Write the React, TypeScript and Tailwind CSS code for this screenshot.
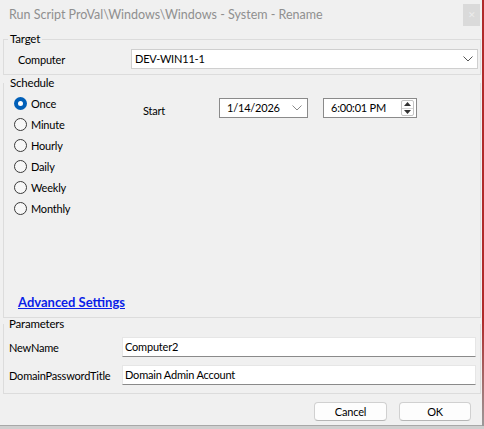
import React from 'react';

const radios = ['Once', 'Minute', 'Hourly', 'Daily', 'Weekly', 'Monthly'];

function Radio({ label, checked }: { label: string; checked?: boolean }) {
  return (
    <div className="h-[21px] flex items-center gap-[4px]">
      {checked ? (
        <div className="w-[13px] h-[13px] rounded-full bg-[#005fb8] flex items-center justify-center">
          <div className="w-[5px] h-[5px] rounded-full bg-white" />
        </div>
      ) : (
        <div className="w-[13px] h-[13px] rounded-full border border-[#3a3a3a] bg-[#f7f7f7]" />
      )}
      <span>{label}</span>
    </div>
  );
}

function Chevron({ color }: { color: string }) {
  return (
    <svg width="10" height="6" viewBox="0 0 10 6" fill="none">
      <path d="M0.5 0.5 L5 5 L9.5 0.5" stroke={color} strokeWidth="1" />
    </svg>
  );
}

export default function App() {
  return (
    <div className="w-[484px] h-[429px] flex bg-[#cfcfcf] text-[11px] tracking-[-0.2px] leading-[16px] text-black font-['Lato','Noto_Sans',sans-serif]">
      <div className="w-[482px] h-[426px] flex flex-col bg-[#f0f0f0] border-b border-[#a8a8a8]">
        {/* Title bar */}
        <div className="h-[30px] flex items-center pl-[9px] pr-[2px]">
          <span className="text-[#8f8f8f] text-[12.5px] tracking-normal">Run Script ProVal\Windows\Windows - System - Rename</span>
          <div className="ml-auto w-[17px] h-[22px] bg-[#dadada] flex items-center justify-center text-[9px] text-[#ececec]">✕</div>
        </div>

        {/* Target */}
        <fieldset className="mt-px ml-[3px] mr-[1px] border border-[#dcdcdc] pb-[5px]">
          <legend className="ml-[4px] px-[2px] leading-[16px] text-[11.5px]">Target</legend>
          <div className="flex items-center mt-[2px]">
            <span className="w-[127px] pl-[14px] pt-[2px]">Computer</span>
            <div className="w-[347px] h-[20px] bg-white border border-[#cfcfcf] flex items-center pl-[3px] pr-[4px]">
              <span>DEV-WIN11-1</span>
              <div className="ml-auto">
                <Chevron color="#555" />
              </div>
            </div>
          </div>
        </fieldset>

        {/* Schedule */}
        <fieldset className="ml-[3px] mr-[1px] border border-[#dcdcdc] border-t-0">
          <legend className="ml-[4px] px-[2px] leading-[16px] text-[11.5px]">Schedule</legend>
          <div className="h-[226px] flex flex-col">
            <div className="flex pt-[2px]">
              <div className="w-[139px] pl-[10px] flex flex-col">
                {radios.map((r, i) => (
                  <Radio key={r} label={r} checked={i === 0} />
                ))}
              </div>
              <div className="flex items-start pt-[5px]">
                <span className="w-[76px] pt-[5px]">Start</span>
                <div className="w-[89px] h-[20px] bg-white border border-[#8a8a8a] flex items-center pl-[7px] pr-[5px]">
                  <span>1/14/2026</span>
                  <div className="ml-auto">
                    <Chevron color="#8a8a8a" />
                  </div>
                </div>
                <div className="ml-[15px] w-[94px] h-[20px] bg-white border border-[#8a8a8a] flex items-center pl-[7px] pr-[2px]">
                  <span>6:00:01 PM</span>
                  <div className="ml-auto w-[13px] h-[16px] border border-[#c4c4c4] rounded-[2px] flex flex-col">
                    <div className="flex-1 flex items-center justify-center border-b border-[#d8d8d8]">
                      <svg width="7" height="4" viewBox="0 0 7 4">
                        <path d="M0 4 L3.5 0 L7 4 Z" fill="#333" />
                      </svg>
                    </div>
                    <div className="flex-1 flex items-center justify-center">
                      <svg width="7" height="4" viewBox="0 0 7 4">
                        <path d="M0 0 L3.5 4 L7 0 Z" fill="#333" />
                      </svg>
                    </div>
                  </div>
                </div>
              </div>
            </div>
            <div className="mt-auto pl-[14px] pb-[6px]">
              <a className="font-bold text-[13px] tracking-normal text-[#0a1ee8] underline">Advanced Settings</a>
            </div>
          </div>
        </fieldset>

        {/* Parameters */}
        <fieldset className="ml-[3px] mr-[1px] border border-[#dcdcdc] border-t-0 pb-[8px]">
          <legend className="ml-[3px] px-[2px] leading-[12px] text-[11.5px]">Parameters</legend>
          <div className="flex items-center mt-[7px]">
            <span className="w-[118px] pl-[5px] pt-[1px]">NewName</span>
            <div className="w-[354px] h-[20px] bg-white border border-[#e6e6e6] border-b-[#8a8a8a] flex items-center pl-[2px]">
              Computer2
            </div>
          </div>
          <div className="flex items-center mt-[8px]">
            <span className="w-[118px] pl-[5px] pt-[1px]">DomainPasswordTitle</span>
            <div className="w-[354px] h-[20px] bg-white border border-[#e6e6e6] border-b-[#8a8a8a] flex items-center pl-[2px]">
              Domain Admin Account
            </div>
          </div>
        </fieldset>

        {/* Buttons */}
        <div className="flex justify-end gap-[12px] pr-[11px] mt-[8px]">
          <button className="w-[73px] h-[19px] bg-[#fdfdfd] border border-[#d0d0d0] border-b-[#b5b5b5] rounded-[4px] leading-[16px]">Cancel</button>
          <button className="w-[72px] h-[19px] bg-[#fdfdfd] border border-[#d0d0d0] border-b-[#b5b5b5] rounded-[4px] leading-[16px]">OK</button>
        </div>
      </div>
      <div className="w-[2px] h-[426px] bg-[linear-gradient(to_bottom,#b02a2a_0%,#b02a2a_75%,#9a9a9a_100%)]" />
    </div>
  );
}
